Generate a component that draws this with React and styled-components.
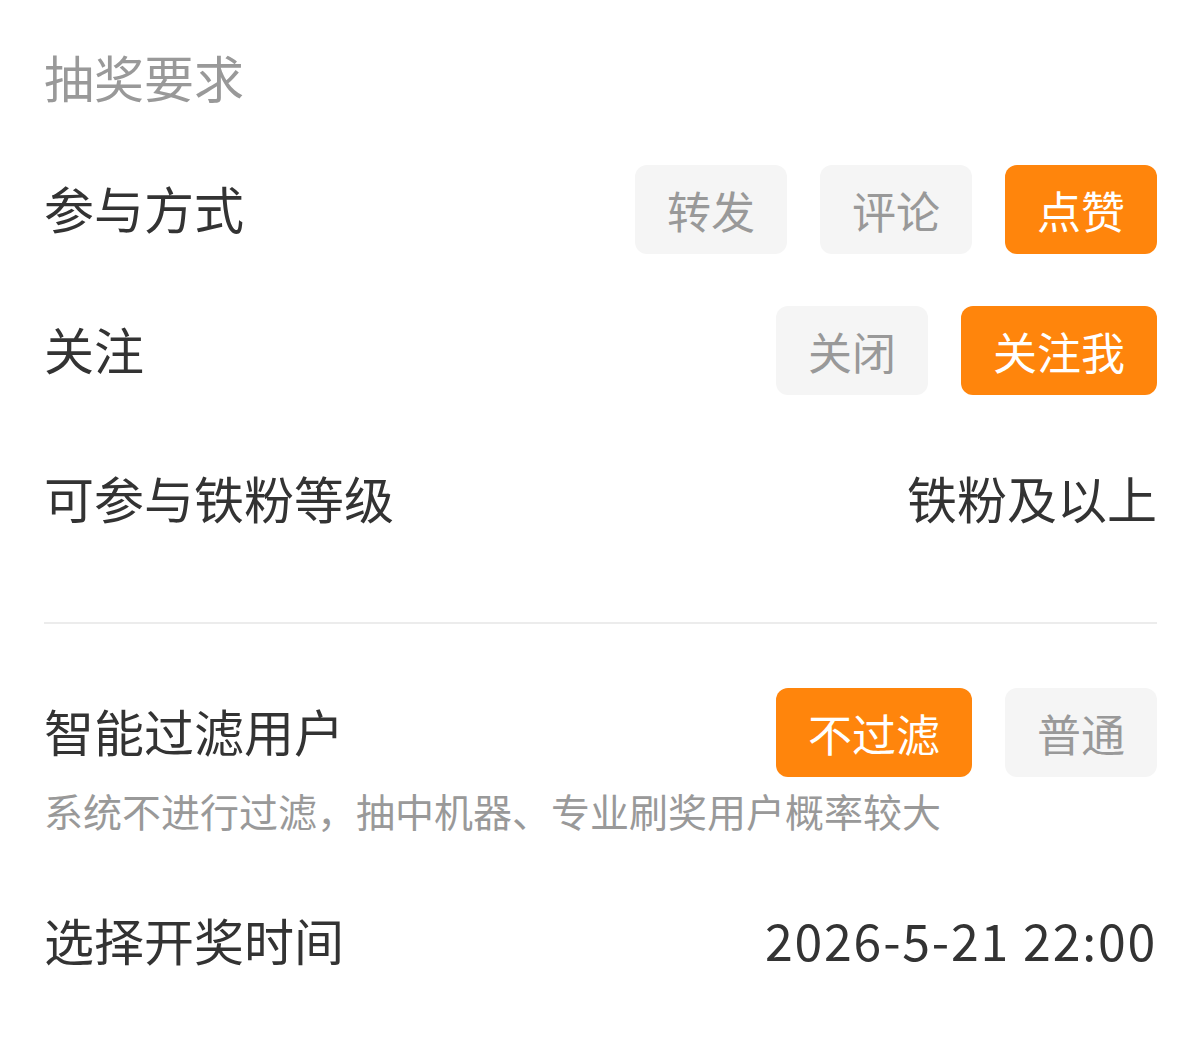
import { useState } from "react";
import styled, { createGlobalStyle } from "styled-components";

const GlobalStyle = createGlobalStyle`
  html, body {
    margin: 0;
    padding: 0;
    background: #fff;
  }
  body {
    font-family: "Noto Sans CJK SC", "Noto Sans", sans-serif;
  }
`;

const Page = styled.div`
  width: 1200px;
  box-sizing: border-box;
  padding: 41px 43px 40px 44px;
`;

const Title = styled.h2`
  margin: 0;
  font-size: 50px;
  line-height: 70px;
  font-weight: 400;
  color: #999;
`;

const Row = styled.div`
  display: flex;
  align-items: center;
  justify-content: space-between;
  height: 89px;
  margin-top: ${(p) => p.$gap || 0}px;
`;

const Label = styled.span`
  font-size: 50px;
  color: #333;
  line-height: 1;
  padding-bottom: 6px;
`;

const Value = styled.span`
  font-size: 50px;
  color: #333;
  line-height: 1;
  padding-bottom: 6px;
  letter-spacing: ${(p) => p.$spacing || 0}px;
`;

const Options = styled.div`
  display: flex;
  gap: 33px;
`;

const Option = styled.button`
  height: 89px;
  padding: 0 32px;
  min-width: 152px;
  border: none;
  border-radius: 12px;
  font-family: inherit;
  font-size: 44px;
  background: ${(p) => (p.$active ? "#ff850c" : "#f5f5f5")};
  color: ${(p) => (p.$active ? "#fff" : "#999")};
  cursor: pointer;
`;

const Divider = styled.hr`
  border: none;
  border-top: 2px solid #ececec;
  margin: 78px 0 0;
`;

const Hint = styled.p`
  margin: 8px 0 0;
  font-size: 39px;
  line-height: 50px;
  color: #999;
`;

const Choice = ({ items, value, onChange }) => (
  <Options>
    {items.map((item) => (
      <Option key={item} $active={item === value} onClick={() => onChange(item)}>
        {item}
      </Option>
    ))}
  </Options>
);

export default function App() {
  const [way, setWay] = useState("点赞");
  const [follow, setFollow] = useState("关注我");
  const [filter, setFilter] = useState("不过滤");

  return (
    <>
      <GlobalStyle />
      <Page>
        <Title>抽奖要求</Title>
        <Row $gap={54}>
          <Label>参与方式</Label>
          <Choice items={["转发", "评论", "点赞"]} value={way} onChange={setWay} />
        </Row>
        <Row $gap={52}>
          <Label>关注</Label>
          <Choice items={["关闭", "关注我"]} value={follow} onChange={setFollow} />
        </Row>
        <Row $gap={60}>
          <Label>可参与铁粉等级</Label>
          <Value>铁粉及以上</Value>
        </Row>
        <Divider />
        <Row $gap={64}>
          <Label>智能过滤用户</Label>
          <Choice items={["不过滤", "普通"]} value={filter} onChange={setFilter} />
        </Row>
        <Hint>系统不进行过滤，抽中机器、专业刷奖用户概率较大</Hint>
        <Row $gap={62}>
          <Label>选择开奖时间</Label>
          <Value $spacing={1.8}>2026-5-21 22:00</Value>
        </Row>
      </Page>
    </>
  );
}
